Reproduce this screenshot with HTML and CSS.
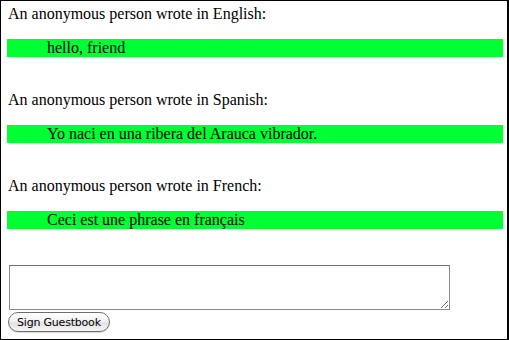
FILE: index.html
```html
<!DOCTYPE html>
<html>
<head>
<meta charset="utf-8">
<link rel="stylesheet" href="styles.css">
</head>
<body>
<div class="frame">
  <div class="entry">
    <p class="who">An anonymous person wrote in English:</p>
    <div class="msg">hello, friend</div>
  </div>
  <div class="entry">
    <p class="who">An anonymous person wrote in Spanish:</p>
    <div class="msg">Yo naci en una ribera del Arauca vibrador.</div>
  </div>
  <div class="entry">
    <p class="who">An anonymous person wrote in French:</p>
    <div class="msg">Ceci est une phrase en français</div>
  </div>
  <form class="sign">
    <textarea class="content"></textarea>
    <button type="button" class="btn">Sign Guestbook</button>
  </form>
</div>
</body>
</html>
```
FILE: styles.css
```css
html, body {
  margin: 0;
  padding: 0;
  background: #fff;
}
.frame {
  box-sizing: border-box;
  width: 509px;
  height: 340px;
  border: 1px solid #000;
  border-right-width: 2px;
  padding: 4px 4px 0 6px;
  font-family: "Liberation Serif", "Times New Roman", serif;
  font-size: 16px;
  line-height: 18px;
  color: #000;
}
.entry {
  display: flex;
  flex-direction: column;
  gap: 16px;
  margin-bottom: 34px;
}
.who {
  margin: 0 0 0 1px;
}
.msg {
  background: #00ff33;
  padding-left: 40px;
  height: 18px;
}
.sign {
  display: flex;
  flex-direction: column;
  align-items: flex-start;
  gap: 2px;
  margin: 0;
  padding-top: 2px;
}
.content {
  box-sizing: border-box;
  width: 441px;
  height: 45px;
  margin: 0 0 0 2px;
  border: 1px solid #8a8a8a;
  border-top-color: #6f6f6f;
  padding: 2px;
  resize: both;
  font-family: "Liberation Mono", monospace;
  font-size: 13px;
}
.btn {
  box-sizing: border-box;
  height: 20px;
  margin: 0 0 0 1px;
  padding: 0 8px;
  border: 1px solid #6e6e6e;
  border-radius: 10px;
  background: linear-gradient(#ffffff 0%, #f3f3f3 45%, #e2e2e2 55%, #f6f6f6 100%);
  font-family: "DejaVu Sans", sans-serif;
  font-size: 11px;
  letter-spacing: -0.2px;
  line-height: 17px;
  color: #000;
  box-shadow: 0 1px 1px rgba(0,0,0,0.15);
}
```
